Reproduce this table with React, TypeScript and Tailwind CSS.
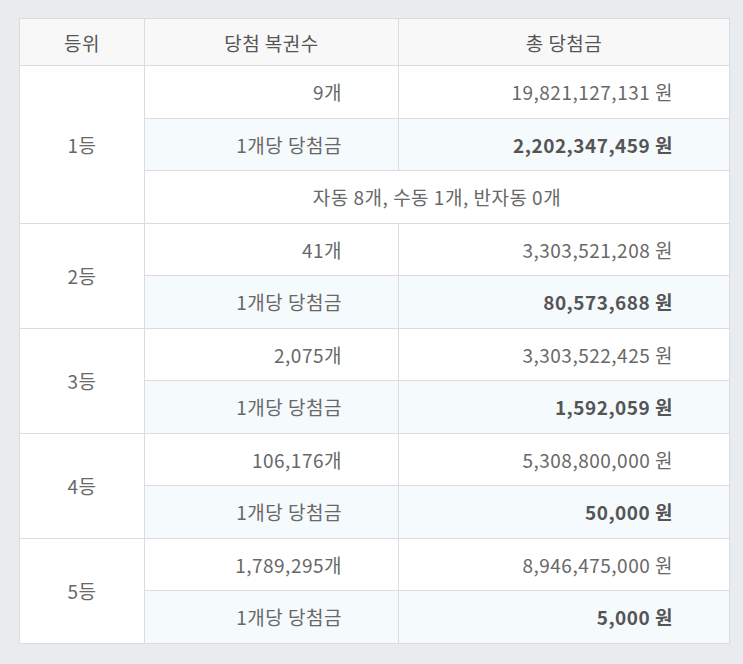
const font = { fontFamily: '"Noto Sans CJK KR", "Noto Sans", sans-serif' };

type Tier = {
  rank: string;
  count: string;
  total: string;
  each: string;
  note?: string;
};

const tiers: Tier[] = [
  {
    rank: "1등",
    count: "9개",
    total: "19,821,127,131 원",
    each: "2,202,347,459 원",
    note: "자동 8개, 수동 1개, 반자동 0개",
  },
  { rank: "2등", count: "41개", total: "3,303,521,208 원", each: "80,573,688 원" },
  { rank: "3등", count: "2,075개", total: "3,303,522,425 원", each: "1,592,059 원" },
  { rank: "4등", count: "106,176개", total: "5,308,800,000 원", each: "50,000 원" },
  { rank: "5등", count: "1,789,295개", total: "8,946,475,000 원", each: "5,000 원" },
];

export default function App() {
  return (
    <div
      className="w-[743px] h-[664px] bg-[#e9ecee] pt-[18px] pl-[19px] text-[#686868] text-[19px] leading-none tracking-[0.5px]"
      style={font}
    >
      <table className="w-[710px] border-collapse table-fixed bg-white">
        <colgroup>
          <col className="w-[125px]" />
          <col className="w-[254px]" />
          <col className="w-[331px]" />
        </colgroup>
        <thead>
          <tr className="h-[47px] bg-[#f8f8f8]">
            <th className="border border-[#dcdcdc] font-normal text-[#555]">등위</th>
            <th className="border border-[#dcdcdc] font-normal text-[#555]">당첨 복권수</th>
            <th className="border border-[#dcdcdc] font-normal text-[#555]">총 당첨금</th>
          </tr>
        </thead>
        <tbody>
          {tiers.map((t) => (
            <>
              <tr key={t.rank + "a"} className="h-[52.5px]">
                <td
                  rowSpan={t.note ? 3 : 2}
                  className="border border-[#dcdcdc] text-center"
                >
                  {t.rank}
                </td>
                <td className="border border-[#dcdcdc] text-right pr-[56px]">{t.count}</td>
                <td className="border border-[#dcdcdc] text-right pr-[56px]">{t.total}</td>
              </tr>
              <tr key={t.rank + "b"} className="h-[52.5px] bg-[#f5fafd]">
                <td className="border border-[#dcdcdc] text-right pr-[56px]">1개당 당첨금</td>
                <td className="border border-[#dcdcdc] text-right pr-[56px] font-bold text-[#555]">
                  {t.each}
                </td>
              </tr>
              {t.note && (
                <tr key={t.rank + "c"} className="h-[52.5px]">
                  <td colSpan={2} className="border border-[#dcdcdc] text-center">
                    {t.note}
                  </td>
                </tr>
              )}
            </>
          ))}
        </tbody>
      </table>
    </div>
  );
}
